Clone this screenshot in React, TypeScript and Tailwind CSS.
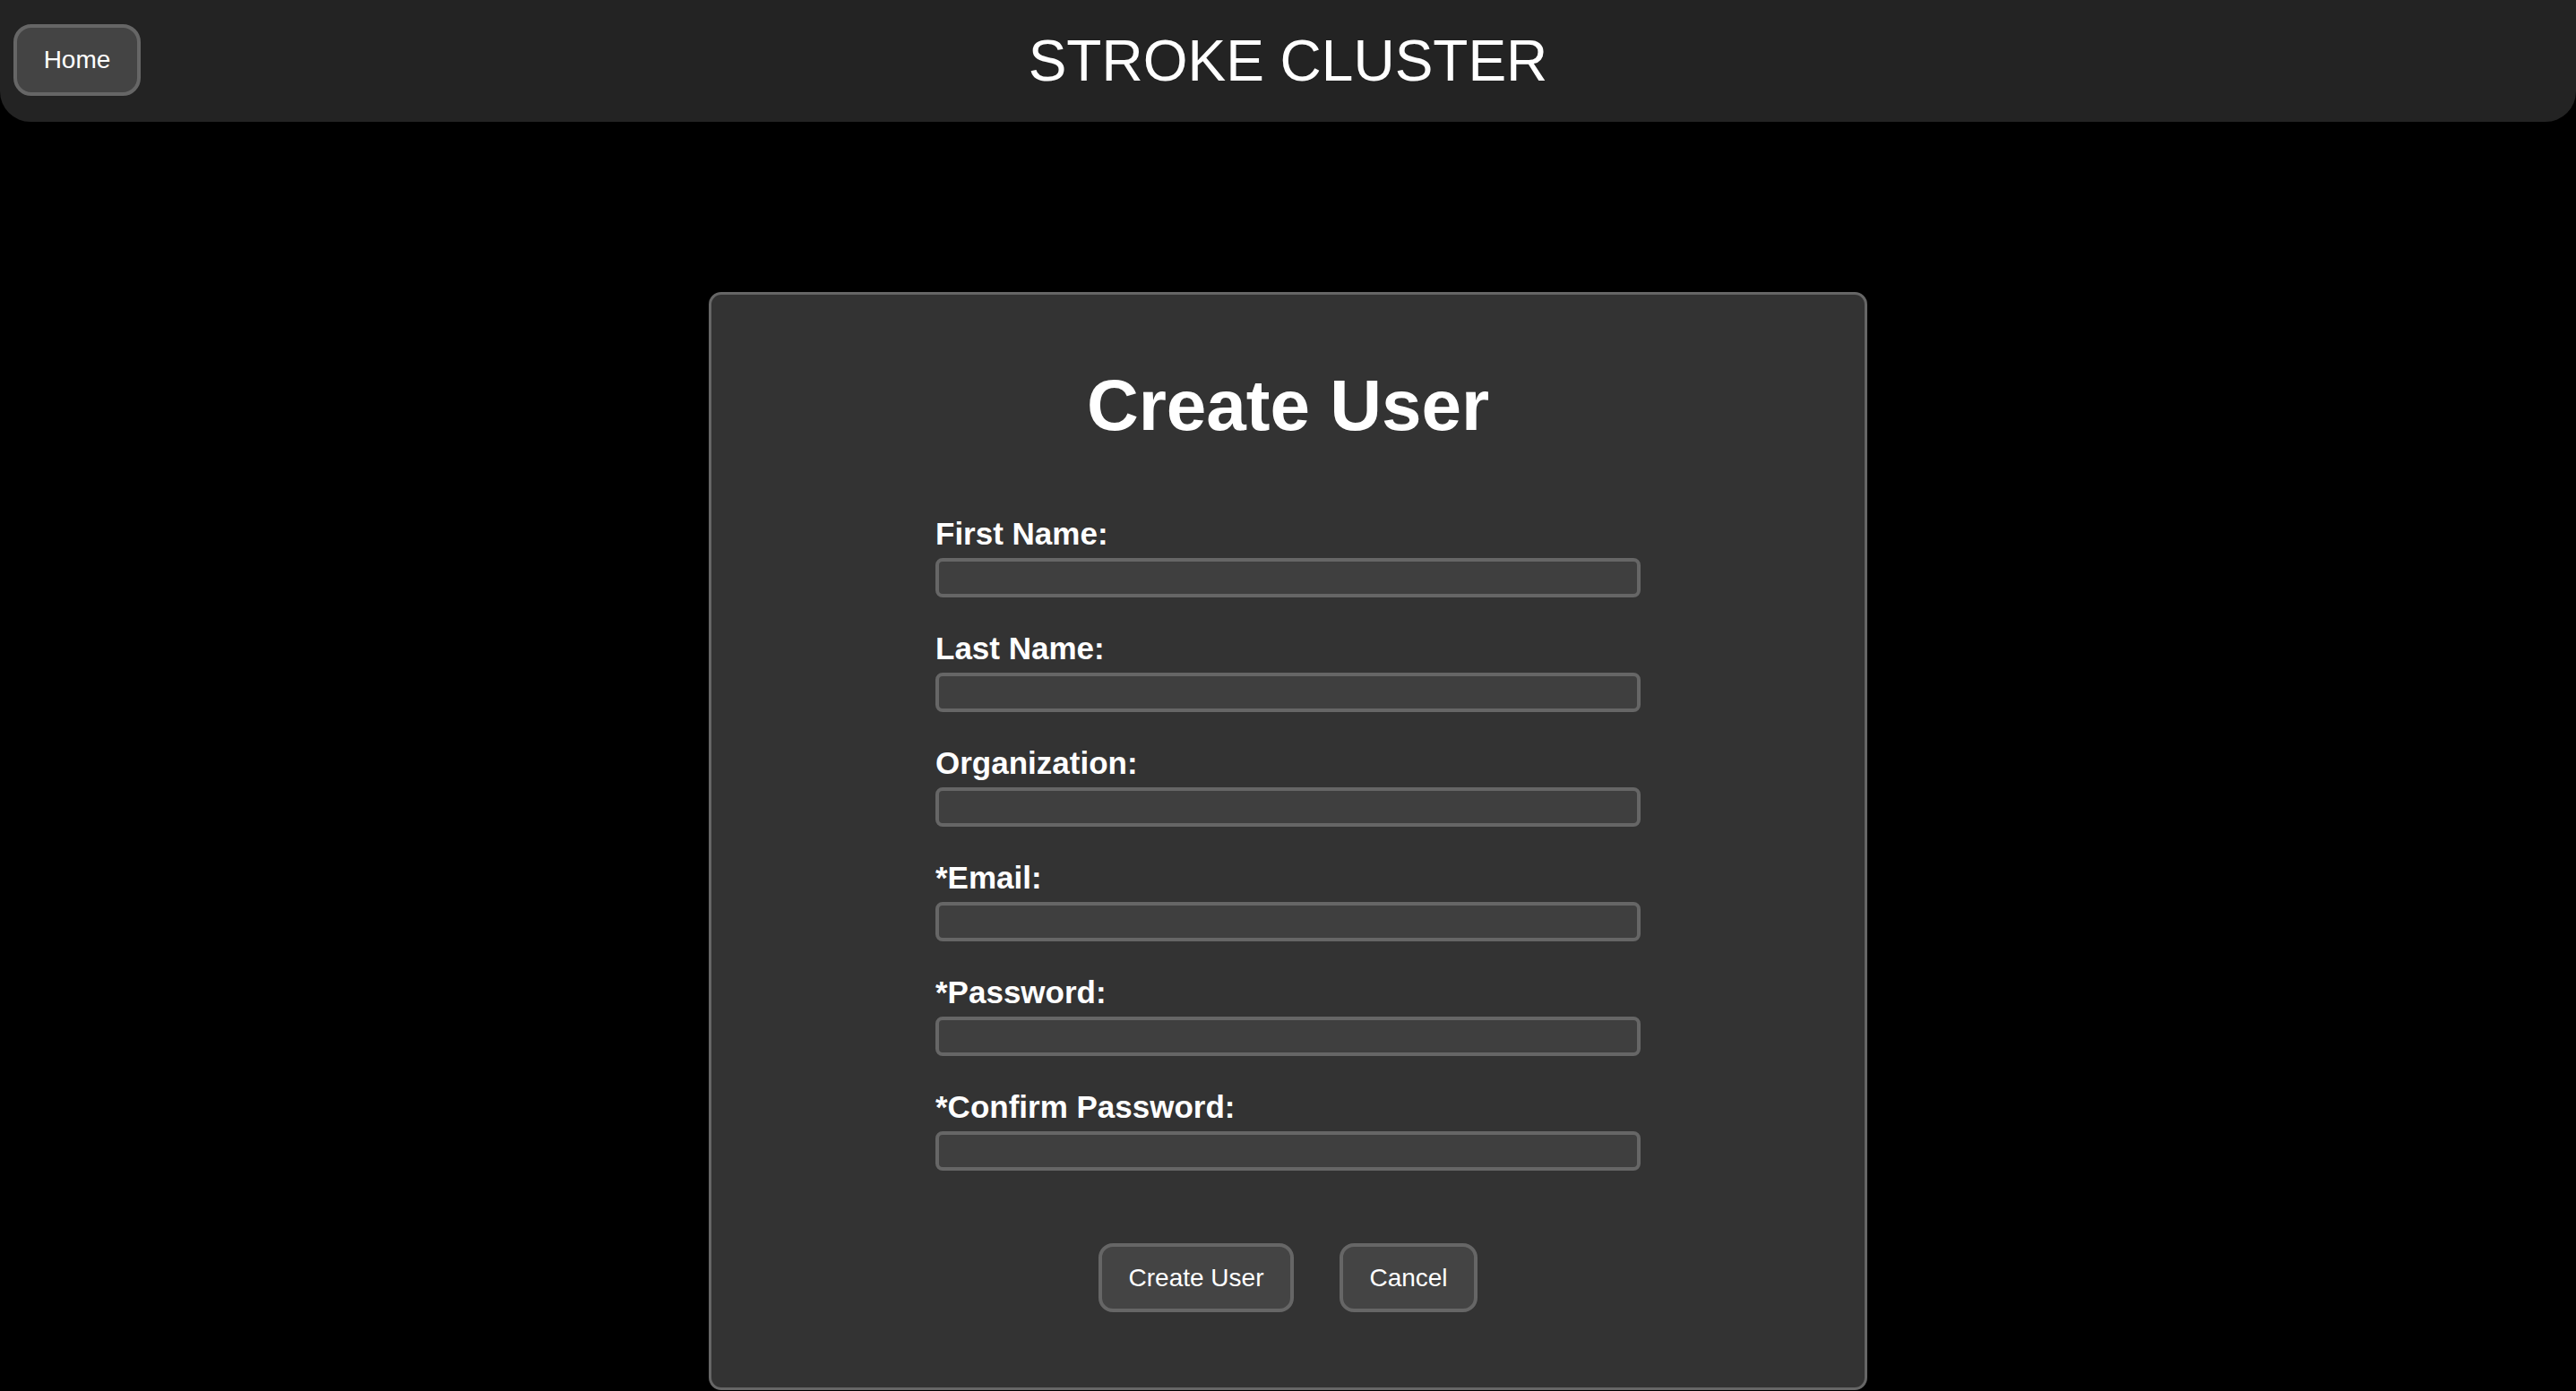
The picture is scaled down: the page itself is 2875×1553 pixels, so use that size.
const FIELDS = [
  { label: 'First Name:', type: 'text' },
  { label: 'Last Name:', type: 'text' },
  { label: 'Organization:', type: 'text' },
  { label: '*Email:', type: 'email' },
  { label: '*Password:', type: 'password' },
  { label: '*Confirm Password:', type: 'password' },
];

const font = { fontFamily: '"Liberation Sans", Arial, sans-serif' };

export default function App() {
  return (
    <div className="min-h-screen bg-black text-white" style={font}>
      <header className="relative flex h-[136px] items-center justify-center rounded-b-[34px] bg-[#232323]">
        <button className="absolute left-[15px] top-[27px] h-[80px] w-[142px] rounded-[20px] border-[4px] border-[#666] bg-[#444] text-[28px] text-white">
          Home
        </button>
        <h1 className="text-[64px] leading-none font-normal tracking-normal">STROKE CLUSTER</h1>
      </header>

      <main className="flex justify-center pt-[190px]">
        <div className="flex w-[1293px] flex-col items-center rounded-[14px] border-[3px] border-[#666] bg-[#333] pt-[84px] pb-[84px]">
          <h2 className="text-[80px] leading-none font-bold">Create User</h2>

          <form className="mt-[83px] flex w-[787px] flex-col gap-[37px]">
            {FIELDS.map((f) => (
              <div key={f.label} className="flex flex-col gap-[7px]">
                <label className="text-[35px] leading-[40px] font-bold">{f.label}</label>
                <input
                  type={f.type}
                  className="h-[44px] w-full rounded-[8px] border-[4px] border-[#666] bg-[#3f3f3f] px-3 text-[26px] text-white outline-none"
                />
              </div>
            ))}
          </form>

          <div className="mt-[81px] flex gap-[51px]">
            <button className="h-[77px] w-[218px] rounded-[16px] border-[4px] border-[#666] bg-[#444] text-[28px] text-white">
              Create User
            </button>
            <button className="h-[77px] w-[154px] rounded-[16px] border-[4px] border-[#666] bg-[#444] text-[28px] text-white">
              Cancel
            </button>
          </div>
        </div>
      </main>
    </div>
  );
}
